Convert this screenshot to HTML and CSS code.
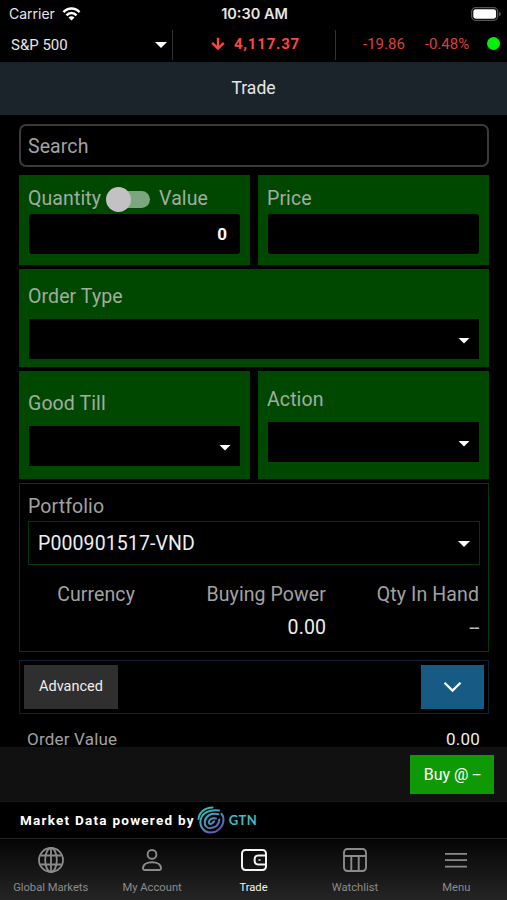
FILE: index.html
```html
<!DOCTYPE html>
<html lang="en">

<head>
  <meta charset="UTF-8">
  <meta name="viewport" content="width=device-width, initial-scale=1.0">
  <title>Trade</title>
  <link rel="stylesheet" href="styles.css">
</head>

<body>

  <div class="status">
    <div class="carrier">
      <span>Carrier</span>
      <svg width="19" height="14" viewBox="0 0 18 14" fill="none" stroke="#fff" stroke-width="2.5">
        <path d="M1 5.2C5.5 .3 12.5 .3 17 5.2" />
        <path d="M4 8.3C6.8 5.3 11.2 5.3 14 8.3" />
        <path d="M9 13.4L6 10.5Q9 8.2 12 10.5Z" fill="#fff" stroke="none" />
      </svg>
    </div>
    <div class="time">10:30 AM</div>
    <div class="battery">
      <svg width="30" height="14" viewBox="0 0 30 14">
        <rect x=".7" y=".7" width="26" height="12.6" rx="4" fill="none" stroke="#555" stroke-width="1.3" />
        <rect x="2.3" y="2.3" width="22.8" height="9.4" rx="2.4" fill="#fff" />
        <path d="M28 4.8Q30 5.5 30 7T28 9.2Z" fill="#555" />
      </svg>
    </div>
  </div>

  <div class="ticker">
    <div class="index">
      <span>S&amp;P 500</span>
      <i class="caret"></i>
    </div>
    <div class="last">
      <svg width="14" height="14" viewBox="0 0 14 14" fill="none" stroke="#fe453f" stroke-width="2.4">
        <path d="M7 .8V12M1.2 5.8L7 11.6L12.8 5.8" />
      </svg>
      <span>4,117.37</span>
    </div>
    <div class="change">
      <span class="points">-19.86</span>
      <span class="percent">-0.48%</span>
      <i class="dot"></i>
    </div>
  </div>

  <div class="title">Trade</div>

  <div class="form">
    <div class="search">Search</div>

    <div class="row amounts">
      <div class="card">
        <div class="label">
          <span>Quantity</span>
          <span class="switch"></span>
          <span>Value</span>
        </div>
        <div class="field quantity">0</div>
      </div>
      <div class="card">
        <div class="label">Price</div>
        <div class="field"></div>
      </div>
    </div>

    <div class="card order-type">
      <div class="label">Order Type</div>
      <div class="field select"><i class="caret"></i></div>
    </div>

    <div class="row terms">
      <div class="card good-till">
        <div class="label">Good Till</div>
        <div class="field select"><i class="caret"></i></div>
      </div>
      <div class="card action">
        <div class="label">Action</div>
        <div class="field select"><i class="caret"></i></div>
      </div>
    </div>

    <div class="portfolio">
      <div class="label">Portfolio</div>
      <div class="account">
        <span>P000901517-VND</span>
        <i class="caret"></i>
      </div>
      <div class="balances">
        <div>Currency</div>
        <div>Buying Power<b>0.00</b></div>
        <div>Qty In Hand<b class="dashes">--</b></div>
      </div>
    </div>

    <div class="advanced">
      <div class="advanced-label">Advanced</div>
      <div class="expand">
        <svg width="19" height="12" viewBox="0 0 19 12" fill="none" stroke="#fff" stroke-width="2.2">
          <path d="M1.5 1.8L9.5 9.6L17.5 1.8" />
        </svg>
      </div>
    </div>

    <div class="order-value">
      <span>Order Value</span>
      <b>0.00</b>
    </div>
  </div>

  <div class="submit">
    <div class="buy">Buy @ <span class="dashes">--</span></div>
  </div>

  <div class="powered">
    <span>Market Data powered by</span>
    <svg width="28" height="28" viewBox="0 0 28 28" fill="none" stroke="url(#swirl)" stroke-width="2" stroke-linecap="round">
      <defs>
        <linearGradient id="swirl" x1="4" y1="2" x2="22" y2="27" gradientUnits="userSpaceOnUse">
          <stop offset="0" stop-color="#38c4b4" />
          <stop offset=".5" stop-color="#4796c4" />
          <stop offset="1" stop-color="#6650ad" />
        </linearGradient>
      </defs>
      <path d="M1.5 13C2 6.5 8 1.5 15.5 1.5" />
      <path d="M22 4.5C13 3 5.5 7 3.8 13C2 20 6.5 26.5 13.5 26.5C21 26.5 26.5 20.5 26.5 13.5C26.5 11 25.8 9.2 24.5 7.8" />
      <path d="M21.5 8.3C14 6.5 8.6 10 7.8 15.5C7.2 20 10 22.6 14 22.1C19 21.5 22 18 22.4 13.4" />
      <path d="M19 12.4C15.5 11.7 12 13.2 11.8 16.3C11.8 18.6 14.2 18.4 15.5 17L17.3 15.3" />
    </svg>
    <span class="brand">GTN</span>
  </div>

  <div class="tabs">
    <div class="tab">
      <svg width="28" height="28" viewBox="0 0 28 28" fill="none" stroke="currentColor" stroke-width="1.8">
        <circle cx="14" cy="14" r="12" />
        <ellipse cx="14" cy="14" rx="5.8" ry="12" />
        <path d="M14 2V26M3.6 9.5H24.4M3.6 18.5H24.4" />
      </svg>
      <span>Global Markets</span>
    </div>
    <div class="tab">
      <svg width="28" height="28" viewBox="0 0 28 28" fill="none" stroke="currentColor" stroke-width="1.9">
        <circle cx="14" cy="8.4" r="4.4" />
        <path d="M5 22.5C5 18.5 9 16.2 14 16.2S23 18.5 23 22.5Q23 24 21.5 24H6.5Q5 24 5 22.5Z" />
      </svg>
      <span>My Account</span>
    </div>
    <div class="tab active">
      <svg width="28" height="28" viewBox="0 0 28 28" fill="none" stroke="currentColor" stroke-width="2">
        <rect x="2" y="4" width="24" height="20" rx="3.4" />
        <path d="M26 9.6H18Q14.6 9.6 14.6 14T18 18.4H26" />
        <path d="M18.4 14H20.6" stroke-width="1.4" />
      </svg>
      <span>Trade</span>
    </div>
    <div class="tab">
      <svg width="28" height="28" viewBox="0 0 28 28" fill="none" stroke="currentColor" stroke-width="1.9">
        <rect x="3" y="3" width="22" height="22" rx="3.4" />
        <path d="M3 10H25M10.3 10V25M17.7 10V25" />
      </svg>
      <span>Watchlist</span>
    </div>
    <div class="tab">
      <svg width="28" height="28" viewBox="0 0 28 28" fill="none" stroke="currentColor" stroke-width="1.8">
        <path d="M3 7.8H25M3 14.2H25M3 20.6H25" />
      </svg>
      <span>Menu</span>
    </div>
  </div>

</body>

</html>
```
FILE: styles.css
```css
* {
  box-sizing: border-box;
}

body {
  font-family: Roboto, sans-serif;
  display: flex;
  flex-direction: column;
  height: 900px;
  margin: 0;
  overflow: hidden;
  background-color: #000;
  color: #e6e6e6;
}

b {
  font-weight: normal;
}

svg {
  display: block;
  flex: none;
}

.caret {
  width: 12px;
  height: 6px;
  background-color: #fff;
  clip-path: polygon(0 0, 100% 0, 50% 100%);
}

.dashes {
  letter-spacing: -0.5px;
}

/* status bar */
.status {
  display: grid;
  grid-template-columns: 1fr auto 1fr;
  align-items: center;
  height: 28px;
  padding: 0 7px 1px 9px;
  font-family: Inter, sans-serif;
  font-size: 14px;
}

.carrier {
  display: flex;
  align-items: center;
  gap: 7px;
}

.time {
  font-size: 14.5px;
  font-weight: 600;
}

.battery {
  display: flex;
  justify-content: flex-end;
  margin-right: -1px;
}

/* index ticker */
.ticker {
  display: flex;
  height: 34px;
  padding-top: 2px;
  font-size: 15px;
}

.ticker > div {
  display: flex;
  align-items: center;
  height: 30px;
}

.index {
  justify-content: space-between;
  width: 173px;
  padding: 0 5px 0 11px;
  border-right: 1.5px solid #333;
}

.last {
  justify-content: center;
  gap: 9px;
  width: 163px;
  padding: 0 0 3px 3px;
  border-right: 1.5px solid #333;
  color: #fe453f;
  font-weight: bold;
  letter-spacing: 0.8px;
}

.change {
  flex: 1;
  padding: 0 7px 3px 27px;
  color: #d8403c;
}

.percent {
  margin-left: 20px;
}

.dot {
  width: 13px;
  height: 13px;
  margin-left: auto;
  border-radius: 50%;
  background-color: #00f20c;
}

.title {
  height: 53px;
  background-color: #1b242a;
  font-size: 17.5px;
  line-height: 53px;
  text-align: center;
}

/* order form */
.form {
  height: 632px;
  padding: 9px 18px 0 19px;
  color: #a2a2a2;
  font-size: 19.5px;
  letter-spacing: 0.1px;
  line-height: 22px;
}

.search {
  height: 43px;
  padding: 10px 7px 0;
  border: 2px solid #3a3a3a;
  border-radius: 7px;
}

.row {
  display: flex;
  gap: 8px;
}

.row .card {
  flex: 1;
}

.card {
  padding: 0 10px;
  background-color: #004800;
  color: #a0ada0;
}

.label {
  display: flex;
  align-items: center;
  height: 22px;
  margin-left: -1px;
  padding-top: 2px;
}

.field {
  height: 40px;
  border-radius: 3px;
  background-color: #000;
}

.select {
  display: flex;
  align-items: center;
  justify-content: flex-end;
  padding: 3px 9px 0 0;
  border-radius: 0;
}

.amounts {
  height: 90px;
  margin-top: 8px;
}

.amounts .card {
  padding-top: 12px;
}

.amounts .field {
  margin-top: 5px;
}

.switch {
  position: relative;
  width: 44px;
  height: 17px;
  margin: 1px 9px 0 5px;
  border-radius: 9px;
  background: linear-gradient(to right, transparent 30%, #7ba77c 30%);
}

.switch::before {
  content: "";
  position: absolute;
  top: -4px;
  left: 0;
  width: 25px;
  height: 25px;
  border-radius: 50%;
  background-color: #c4c1c4;
}

.quantity {
  padding-right: 13px;
  color: #fff;
  font-size: 17px;
  font-weight: bold;
  line-height: 41px;
  text-align: right;
}

.order-type {
  height: 98px;
  margin-top: 4px;
  padding-top: 16px;
}

.order-type .field {
  margin-top: 12px;
}

.terms {
  height: 108px;
  margin-top: 4px;
}

.good-till {
  padding-top: 21px;
}

.good-till .field {
  margin-top: 12px;
}

.action {
  padding-top: 17px;
}

.action .field {
  margin-top: 12px;
}

.portfolio {
  height: 169px;
  margin-top: 4px;
  padding: 11px 9px 0 10px;
  border: 1px solid #043804;
}

.portfolio .label {
  margin-left: -2px;
}

.account {
  display: flex;
  align-items: center;
  justify-content: space-between;
  height: 44px;
  margin: 4px -1px 0 -2px;
  padding: 2px 9px 0;
  border: 1px solid #043804;
  color: #eee;
}

.balances {
  display: grid;
  grid-template-columns: 105px 191px 1fr;
  margin-top: 19px;
  text-align: right;
}

.balances b {
  display: block;
  margin-top: 11px;
  color: #eee;
}

.balances .dashes {
  color: #bbb;
}

.advanced {
  display: flex;
  justify-content: space-between;
  height: 54px;
  margin-top: 8px;
  padding: 4px 4px 0;
  border: 1px solid #0b2236;
}

.advanced-label {
  width: 94px;
  height: 44px;
  background-color: #2f2f2f;
  color: #eee;
  font-size: 14.5px;
  letter-spacing: 0;
  line-height: 44px;
  text-align: center;
}

.expand {
  display: flex;
  align-items: center;
  justify-content: center;
  width: 63px;
  height: 44px;
  background-color: #175b84;
}

.order-value {
  display: flex;
  justify-content: space-between;
  margin-top: 17px;
  padding: 0 9px 0 8px;
  font-size: 17px;
  letter-spacing: 0.2px;
  line-height: 16px;
}

.order-value b {
  color: #eee;
}

.submit {
  display: flex;
  justify-content: flex-end;
  height: 54px;
  padding: 8px 13px 0 0;
  background-color: #111;
}

.buy {
  width: 84px;
  height: 39px;
  background-color: #0f9a05;
  color: #fff;
  font-size: 16px;
  line-height: 39px;
  text-align: center;
}

.powered {
  display: flex;
  align-items: center;
  height: 37px;
  padding: 0 0 1px 20px;
  border-top: 1px solid #181818;
  color: #fff;
  font-size: 13.5px;
  font-weight: bold;
  letter-spacing: 1.25px;
}

.powered svg {
  margin: 0 4px 0 2px;
}

.brand {
  color: #3fbcc0;
  font-family: Lato, sans-serif;
  font-size: 13px;
  letter-spacing: 0.4px;
}

/* bottom tabs */
.tabs {
  display: flex;
  height: 62px;
  border-top: 1px solid #222;
  background: linear-gradient(#050505, #252525);
}

.tab {
  display: flex;
  flex: 1;
  flex-direction: column;
  align-items: center;
  padding-top: 7px;
  color: #8b8b8b;
  font-size: 11.2px;
  line-height: 14px;
}

.tab span {
  margin-top: 7px;
}

.active {
  color: #f4f4f4;
}
```
